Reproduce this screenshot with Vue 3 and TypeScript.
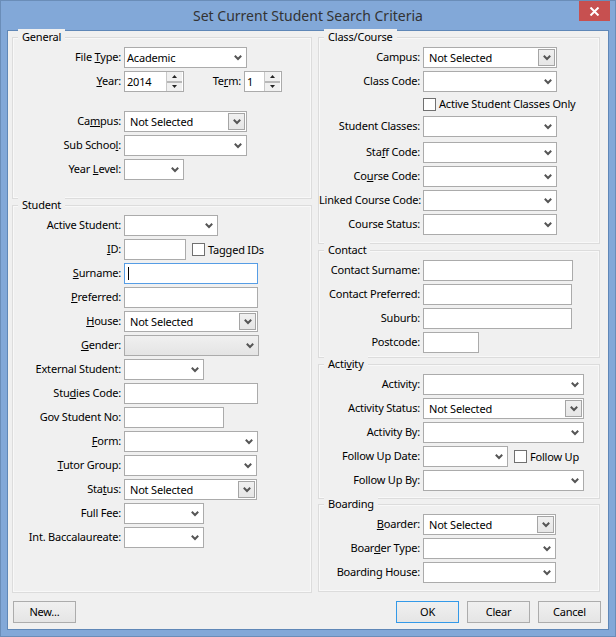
<script setup lang="ts">
type Kind = 'select' | 'input' | 'button' | 'disabled' | 'spin' | 'none'
interface Extra { kind: 'check' | 'spin'; text: [string, string, string]; ml: number; w?: number; value?: string }
interface Row {
  label?: [string, string, string]
  kind: Kind
  w?: number
  mt?: number
  value?: string
  focus?: boolean
  extra?: Extra
}
interface Group { title: [string, string, string]; cls: string; rows: Row[] }

const l = (a: string, k = '', b = ''): [string, string, string] => [a, k, b]
const ns = 'Not Selected'

const left: Group[] = [
  {
    title: l('General'), cls: 'general',
    rows: [
      { label: l('File ', 'T', 'ype:'), kind: 'select', w: 123, value: 'Academic' },
      { label: l('', 'Y', 'ear:'), kind: 'spin', w: 60, value: '2014', extra: { kind: 'spin', text: l('Te', 'r', 'm:'), ml: 57, w: 38, value: '1' } },
      { label: l('Ca', 'm', 'pus:'), kind: 'button', w: 123, mt: 19, value: ns },
      { label: l('Sub Schoo', 'l', ':'), kind: 'select', w: 123 },
      { label: l('Year ', 'L', 'evel:'), kind: 'select', w: 60 },
    ],
  },
  {
    title: l('Student'), cls: 'student',
    rows: [
      { label: l('Active Student:'), kind: 'select', w: 94 },
      { label: l('', 'I', 'D:'), kind: 'input', w: 62, extra: { kind: 'check', text: l('Tagged IDs'), ml: 6 } },
      { label: l('', 'S', 'urname:'), kind: 'input', w: 134, focus: true },
      { label: l('', 'P', 'referred:'), kind: 'input', w: 134 },
      { label: l('', 'H', 'ouse:'), kind: 'button', w: 134, value: ns },
      { label: l('', 'G', 'ender:'), kind: 'disabled', w: 135 },
      { label: l('External Student:'), kind: 'select', w: 80 },
      { label: l('Stu', 'd', 'ies Code:'), kind: 'input', w: 134 },
      { label: l('Gov Student No:'), kind: 'input', w: 100 },
      { label: l('', 'F', 'orm:'), kind: 'select', w: 134 },
      { label: l('', 'T', 'utor Group:'), kind: 'select', w: 133 },
      { label: l('Sta', 't', 'us:'), kind: 'button', w: 133, value: ns },
      { label: l('Full Fee:'), kind: 'select', w: 80 },
      { label: l('Int. Baccalaureate:'), kind: 'select', w: 80 },
    ],
  },
]

const right: Group[] = [
  {
    title: l('Class/Course'), cls: 'course',
    rows: [
      { label: l('Campus:'), kind: 'button', w: 134, value: ns },
      { label: l('Class Code:'), kind: 'select', w: 134 },
      { kind: 'none', extra: { kind: 'check', text: l('Active Student Classes Only'), ml: 0 } },
      { label: l('Student Classes:'), kind: 'select', w: 134 },
      { label: l('Sta', 'f', 'f Code:'), kind: 'select', w: 134, mt: 5 },
      { label: l('Co', 'u', 'rse Code:'), kind: 'select', w: 134 },
      { label: l('Linked Course Code:'), kind: 'select', w: 134 },
      { label: l('Course Status:'), kind: 'select', w: 134 },
    ],
  },
  {
    title: l('Contact'), cls: 'contact',
    rows: [
      { label: l('Contact Surname:'), kind: 'input', w: 150 },
      { label: l('Contact Preferred:'), kind: 'input', w: 149 },
      { label: l('Suburb:'), kind: 'input', w: 149 },
      { label: l('Postcode:'), kind: 'input', w: 56 },
    ],
  },
  {
    title: l('Acti', 'v', 'ity'), cls: 'activity',
    rows: [
      { label: l('Activity:'), kind: 'select', w: 161 },
      { label: l('Activity Status:'), kind: 'button', w: 161, value: ns },
      { label: l('Activity By:'), kind: 'select', w: 161 },
      { label: l('Follow Up Date:'), kind: 'select', w: 85, extra: { kind: 'check', text: l('Follow Up'), ml: 6 } },
      { label: l('Follow Up By:'), kind: 'select', w: 161 },
    ],
  },
  {
    title: l('Boarding'), cls: 'boarding',
    rows: [
      { label: l('', 'B', 'oarder:'), kind: 'button', w: 133, value: ns },
      { label: l('Boar', 'd', 'er Type:'), kind: 'select', w: 133 },
      { label: l('Boarding House:'), kind: 'select', w: 133 },
    ],
  },
]

const columns = [
  { cls: 'col-left', groups: left },
  { cls: 'col-right', groups: right },
]
</script>

<template>
  <div class="window">
    <header class="titlebar">
      <span></span>
      <h1 class="title">Set Current Student Search Criteria</h1>
      <button class="close" aria-label="Close">
        <svg width="11" height="9" viewBox="0 0 11 9"><path d="M1.5 0.5 L9.5 8.5 M9.5 0.5 L1.5 8.5" stroke="#fff" stroke-width="2" fill="none" /></svg>
      </button>
    </header>
    <main class="client">
      <div class="columns">
        <div v-for="col in columns" :key="col.cls" class="col" :class="col.cls">
          <section v-for="g in col.groups" :key="g.cls" class="group" :class="g.cls">
            <div class="legend">{{ g.title[0] }}<u>{{ g.title[1] }}</u>{{ g.title[2] }}</div>
            <div
              v-for="(r, i) in g.rows"
              :key="i"
              class="row"
              :class="{ short: r.kind === 'none' }"
              :style="r.mt ? { marginTop: r.mt + 'px' } : undefined"
            >
              <label class="lbl"><template v-if="r.label">{{ r.label[0] }}<u>{{ r.label[1] }}</u>{{ r.label[2] }}</template></label>
              <div
                v-if="r.kind !== 'none'"
                class="field"
                :class="[r.kind, { focus: r.focus }]"
                :style="{ width: r.w + 'px' }"
              >
                <span class="val">{{ r.value }}</span>
                <i v-if="r.focus" class="caret"></i>
                <svg v-if="r.kind === 'select' || r.kind === 'disabled'" class="chev" width="8" height="6" viewBox="0 0 8 6"><path d="M0.8 0.8 L4 4 L7.2 0.8" stroke="#555" stroke-width="2" fill="none" /></svg>
                <span v-if="r.kind === 'button'" class="dropbtn">
                  <svg width="8" height="6" viewBox="0 0 8 6"><path d="M0.8 0.8 L4 4 L7.2 0.8" stroke="#555" stroke-width="2" fill="none" /></svg>
                </span>
                <span v-if="r.kind === 'spin'" class="spinner">
                  <span class="spin-part"><svg width="5" height="3" viewBox="0 0 5 3"><path d="M2.5 0 L5 3 H0 Z" fill="#222" /></svg></span>
                  <span class="spin-part"><svg width="5" height="3" viewBox="0 0 5 3"><path d="M0 0 H5 L2.5 3 Z" fill="#222" /></svg></span>
                </span>
              </div>
              <template v-if="r.extra">
                <label v-if="r.extra.kind === 'check'" class="check" :style="{ marginLeft: r.extra.ml + 'px' }">
                  <i class="box"></i>{{ r.extra.text[0] }}
                </label>
                <template v-else>
                  <label class="term" :style="{ marginLeft: r.extra.ml + 'px' }">
                    <span class="term-text">{{ r.extra.text[0] }}<u>{{ r.extra.text[1] }}</u>{{ r.extra.text[2] }}</span>
                  </label>
                  <div class="field spin" :style="{ width: r.extra.w + 'px' }">
                    <span class="val">{{ r.extra.value }}</span>
                    <span class="spinner">
                      <span class="spin-part"><svg width="5" height="3" viewBox="0 0 5 3"><path d="M2.5 0 L5 3 H0 Z" fill="#222" /></svg></span>
                      <span class="spin-part"><svg width="5" height="3" viewBox="0 0 5 3"><path d="M0 0 H5 L2.5 3 Z" fill="#222" /></svg></span>
                    </span>
                  </div>
                </template>
              </template>
            </div>
          </section>
        </div>
      </div>
      <footer class="footer">
        <button class="btn">New...</button>
        <div class="spacer"></div>
        <button class="btn primary">OK</button>
        <button class="btn">Clear</button>
        <button class="btn">Cancel</button>
      </footer>
    </main>
  </div>
</template>

<style scoped>
.window {
  width: 616px;
  height: 637px;
  box-sizing: border-box;
  background: #82a8d8;
  border: 1px solid #6a8db8;
  display: flex;
  flex-direction: column;
  font-family: "Noto Sans", Roboto, sans-serif;
  font-size: 11px;
  letter-spacing: -0.2px;
  color: #000;
  padding: 0 6px 6px;
}
.titlebar {
  height: 29px;
  flex: none;
  display: grid;
  grid-template-columns: 1fr auto 1fr;
  align-items: start;
}
.title {
  margin: 5px 0 0;
  font-size: 14px;
  font-weight: 400;
  letter-spacing: 0;
  line-height: 20px;
  color: #333;
}
.close {
  justify-self: end;
  width: 31px;
  height: 20px;
  padding: 0;
  border: 0;
  background: #c75050;
  display: flex;
  align-items: center;
  justify-content: center;
  margin-right: -1px;
}
.client {
  flex: 1;
  background: #f0f0f0;
  border: 1px solid #5f87b7;
  padding: 6px 7px 6px 4px;
  display: flex;
  flex-direction: column;
  min-height: 0;
}
.columns {
  display: flex;
  flex: 1;
  gap: 6px;
  min-height: 0;
}
.col {
  display: flex;
  flex-direction: column;
}
.col-left { width: 300px; }
.col-right { width: 282px; }
.group {
  border: 1px solid #dcdcdc;
  box-shadow: inset 0 0 0 1px #f8f8f8;
  padding-top: 9px;
}
.general { padding-bottom: 18px; }
.student { margin-top: 6px; flex: 1; }
.course { padding-bottom: 8px; }
.contact { margin-top: 6px; padding-bottom: 4px; }
.activity { margin-top: 6px; padding-bottom: 7px; }
.boarding { margin-top: 5px; padding-bottom: 8px; }
.legend {
  width: max-content;
  margin: -18px 0 2px 5px;
  padding: 0 4px;
  height: 16px;
  line-height: 16px;
  background: #f0f0f0;
}
.row {
  display: flex;
  align-items: center;
  height: 21px;
  margin-top: 3px;
}
.legend + .row { margin-top: 0; }
.row.short { height: 18px; }
.lbl {
  flex: none;
  white-space: nowrap;
  text-align: right;
  box-sizing: border-box;
  padding-right: 3px;
  line-height: 16px;
  margin-top: -2px;
}
.col-left .lbl { width: 111px; }
.col-right .lbl { width: 104px; }
.field {
  flex: none;
  height: 21px;
  box-sizing: border-box;
  background: #fff;
  border: 1px solid #ababab;
  display: flex;
  align-items: center;
  position: relative;
  padding-left: 2px;
  line-height: 16px;
}
.field.button { padding-left: 5px; }
.field.disabled {
  background: linear-gradient(#f0f0f0, #e4e4e4);
}
.field.focus { border-color: #569de5; }
.val { flex: 1; white-space: nowrap; min-width: 0; }
.caret {
  position: absolute;
  left: 3px;
  top: 3px;
  width: 1px;
  height: 13px;
  background: #000;
}
.chev {
  flex: none;
  margin-right: 4px;
}
.dropbtn {
  flex: none;
  width: 17px;
  height: 17px;
  box-sizing: border-box;
  margin-right: 1px;
  background: linear-gradient(#f0f0f0, #e6e6e6);
  border: 1px solid #a5a5a5;
  display: flex;
  align-items: center;
  justify-content: center;
}
.spinner {
  flex: none;
  align-self: stretch;
  width: 15px;
  margin-right: 1px;
  display: flex;
  flex-direction: column;
  gap: 2px;
  background: #b8b8b8;
  border-left: 1px solid #c8c8c8;
}
.spin-part {
  flex: 1;
  background: #f0f0f0;
  display: flex;
  align-items: center;
  justify-content: center;
}
.term {
  flex: none;
  white-space: nowrap;
  width: 0;
  display: flex;
  justify-content: flex-end;
  padding-right: 3px;
  margin-top: -2px;
  line-height: 16px;
}
.check {
  display: flex;
  align-items: center;
  white-space: nowrap;
  gap: 3px;
  line-height: 16px;
}
.box {
  width: 13px;
  height: 13px;
  box-sizing: border-box;
  background: #fff;
  border: 1px solid #707070;
  flex: none;
}
.footer {
  flex: none;
  display: flex;
  gap: 8px;
  margin-top: 8px;
  padding-left: 1px;
}
.spacer { flex: 1; }
.btn {
  width: 63px;
  height: 22px;
  box-sizing: border-box;
  padding: 0;
  border: 1px solid #acacac;
  background: linear-gradient(#f0f0f0, #e5e5e5);
  font: inherit;
  letter-spacing: inherit;
  color: #000;
  line-height: 18px;
}
.btn.primary { border-color: #3399e8; }
u { text-decoration-thickness: 1px; text-underline-offset: 1px; }
</style>

<style>
html, body { margin: 0; padding: 0; background: #82a8d8; }
</style>
